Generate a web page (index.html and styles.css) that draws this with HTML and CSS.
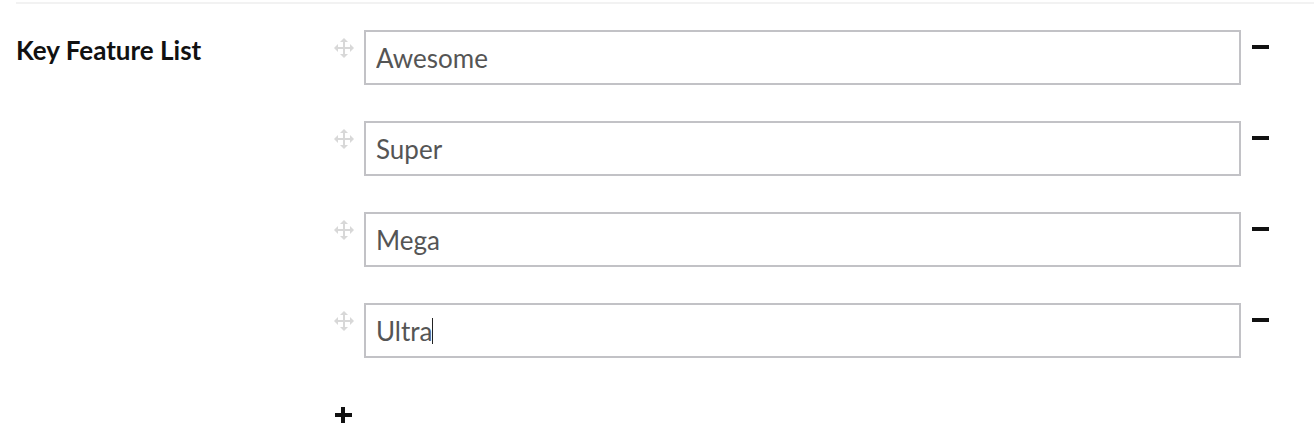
FILE: index.html
```html
<!DOCTYPE html>
<html lang="en">
<head>
  <meta charset="UTF-8">
  <title>Key Feature List</title>
  <link rel="stylesheet" href="styles.css">
</head>
<body>
  <div class="section">
    <div class="field">
      <label class="field-label">Key Feature List</label>
      <div class="field-list">
        <div class="item">
          <span class="handle">
            <svg viewBox="0 0 20 20" width="20" height="20"><path d="M10 3v14M3 10h14"/><path class="head" d="M10 0l-4 4h8zM10 20l-4-4h8zM0 10l4-4v8zM20 10l-4-4v8z"/></svg>
          </span>
          <div class="input-wrap">
            <input type="text" class="item-input" value="Awesome">
          </div>
          <button class="remove"><span class="minus"></span></button>
        </div>
        <div class="item">
          <span class="handle">
            <svg viewBox="0 0 20 20" width="20" height="20"><path d="M10 3v14M3 10h14"/><path class="head" d="M10 0l-4 4h8zM10 20l-4-4h8zM0 10l4-4v8zM20 10l-4-4v8z"/></svg>
          </span>
          <div class="input-wrap">
            <input type="text" class="item-input" value="Super">
          </div>
          <button class="remove"><span class="minus"></span></button>
        </div>
        <div class="item">
          <span class="handle">
            <svg viewBox="0 0 20 20" width="20" height="20"><path d="M10 3v14M3 10h14"/><path class="head" d="M10 0l-4 4h8zM10 20l-4-4h8zM0 10l4-4v8zM20 10l-4-4v8z"/></svg>
          </span>
          <div class="input-wrap">
            <input type="text" class="item-input" value="Mega">
          </div>
          <button class="remove"><span class="minus"></span></button>
        </div>
        <div class="item">
          <span class="handle">
            <svg viewBox="0 0 20 20" width="20" height="20"><path d="M10 3v14M3 10h14"/><path class="head" d="M10 0l-4 4h8zM10 20l-4-4h8zM0 10l4-4v8zM20 10l-4-4v8z"/></svg>
          </span>
          <div class="input-wrap">
            <input type="text" class="item-input" value="Ultra">
            <span class="caret"></span>
          </div>
          <button class="remove"><span class="minus"></span></button>
        </div>
        <button class="add"><span class="plus"></span></button>
      </div>
    </div>
  </div>
</body>
</html>
```

FILE: styles.css
```css
body {
  margin: 0;
  font-family: Lato, "Open Sans", sans-serif;
  background: #fff;
}
.section {
  margin: 2px 0 0 16px;
  border-top: 2px solid #f2f2f2;
  padding-top: 26px;
}
.field {
  display: flex;
}
.field-label {
  width: 316px;
  flex-shrink: 0;
  font-size: 26px;
  font-weight: bold;
  color: #111;
  padding-top: 4px;
}
.field-list {
  flex: 1;
}
.item {
  display: flex;
  align-items: flex-start;
  margin-bottom: 36px;
}
.handle {
  width: 32px;
  flex-shrink: 0;
  padding: 8px 0 0 2px;
  box-sizing: border-box;
}
.handle svg {
  display: block;
  fill: none;
  stroke: #d8d8d8;
  stroke-width: 2;
}
.handle svg .head {
  fill: #d8d8d8;
  stroke: none;
}
.input-wrap {
  flex: 1;
  position: relative;
  display: flex;
}
.item-input {
  flex: 1;
  height: 55px;
  box-sizing: border-box;
  border: 2px solid #c2c2c6;
  padding: 0 10px;
  font-family: Lato, "Open Sans", sans-serif;
  font-size: 26px;
  color: #555;
  outline: none;
}
.caret {
  position: absolute;
  left: 68px;
  top: 15px;
  width: 1px;
  height: 26px;
  background: #222;
}
.remove {
  width: 73px;
  flex-shrink: 0;
  background: none;
  border: none;
  padding: 15px 0 0 11px;
  text-align: left;
  cursor: pointer;
}
.minus {
  display: block;
  width: 17px;
  height: 4px;
  background: #111;
}
.add {
  background: none;
  border: none;
  padding: 13px 0 0 3px;
  cursor: pointer;
}
.plus {
  display: block;
  position: relative;
  width: 17px;
  height: 16px;
}
.plus::before,
.plus::after {
  content: "";
  position: absolute;
  background: #111;
}
.plus::before {
  left: 0;
  top: 6px;
  width: 17px;
  height: 4px;
}
.plus::after {
  left: 6px;
  top: 0;
  width: 4px;
  height: 16px;
}
```
